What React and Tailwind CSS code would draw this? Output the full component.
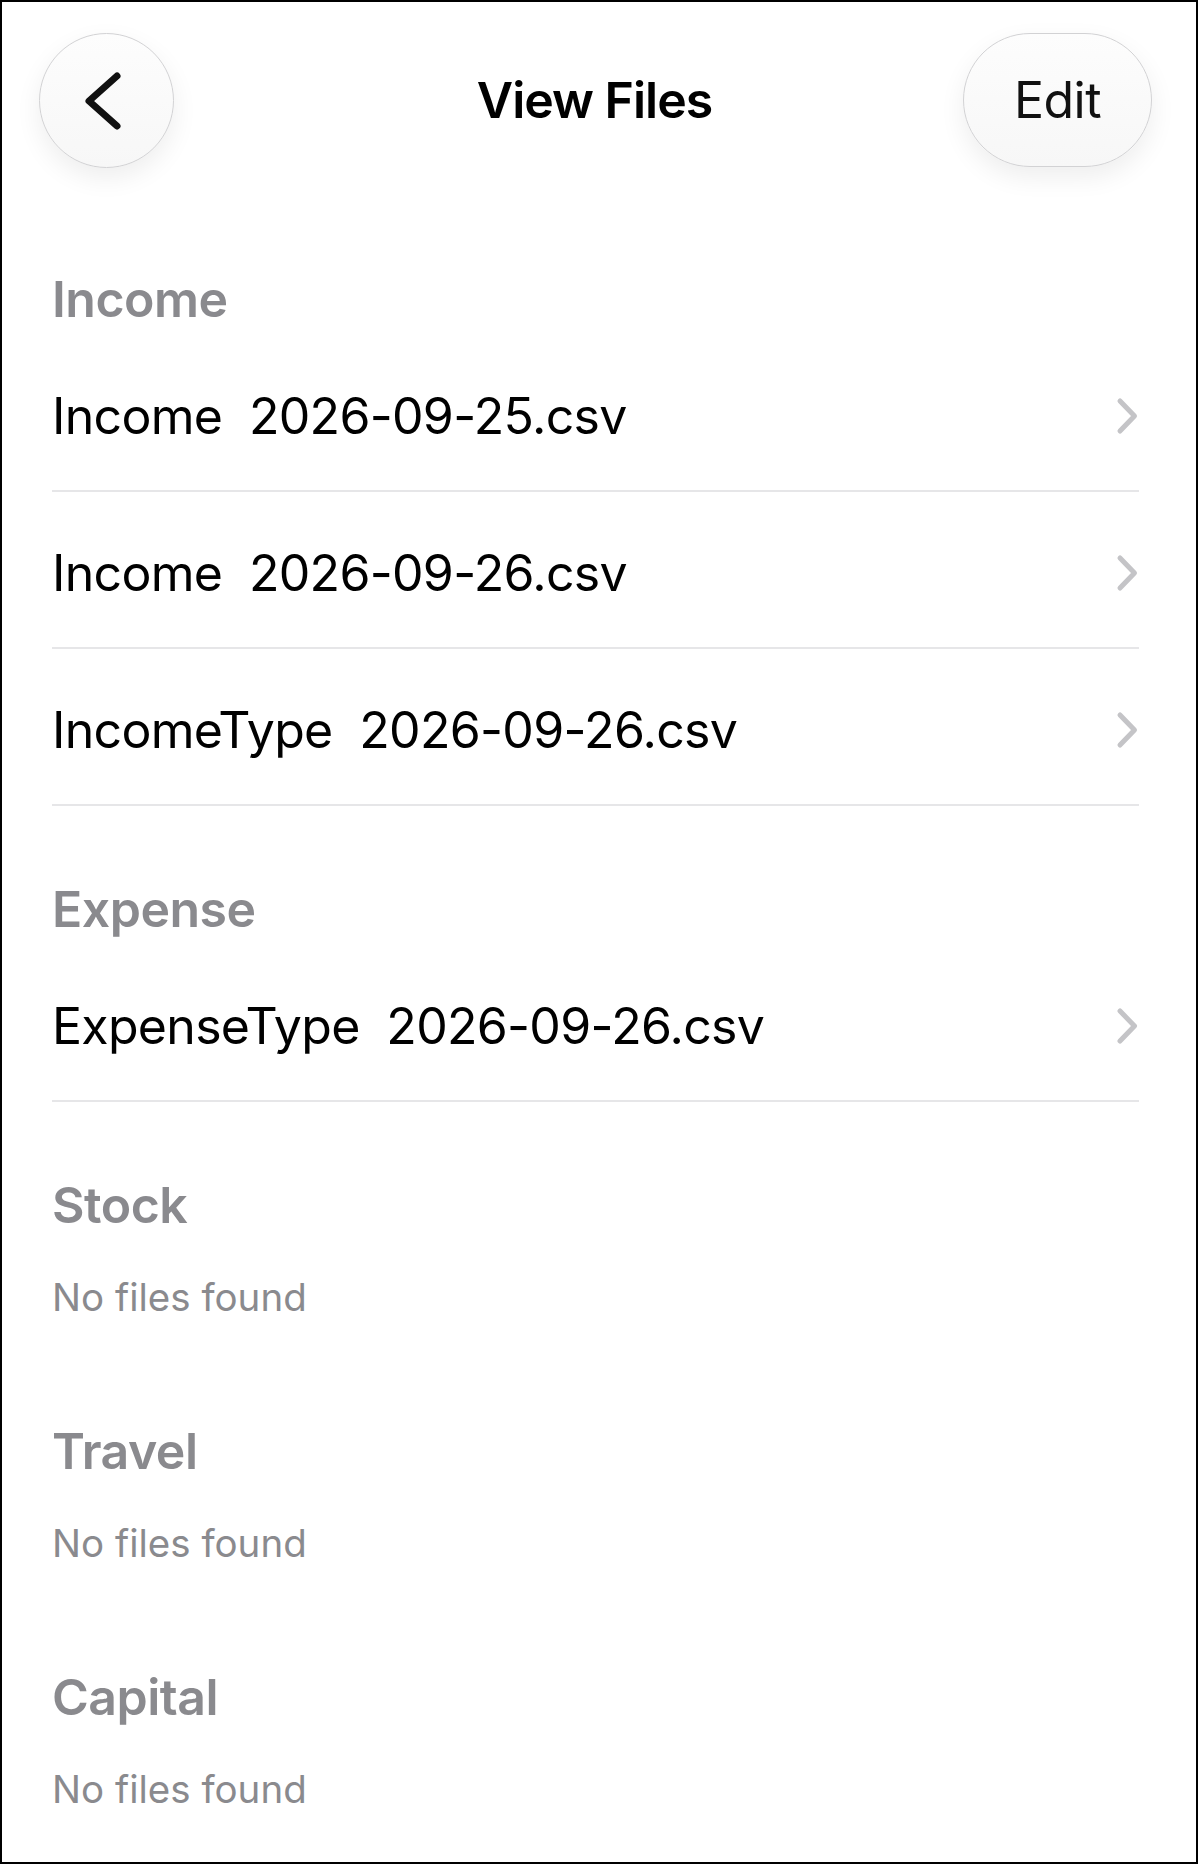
import React from "react";

const font = { fontFamily: "Inter, 'Noto Sans', sans-serif" };

function RowChevron() {
  return (
    <svg width="24" height="38" viewBox="0 0 24 38" fill="none" className="shrink-0">
      <path d="M6 4 L20.5 19 L6 34" stroke="#c4c4c7" strokeWidth="5" strokeLinecap="round" strokeLinejoin="round" />
    </svg>
  );
}

function FileRow({ name }) {
  return (
    <div className="flex h-[157px] items-center justify-between border-b-2 border-[#e6e6e8] pt-[6px] pr-[1px]">
      <span className="text-[50px] leading-[60px] tracking-[-0.014em] text-black">{name}</span>
      <RowChevron />
    </div>
  );
}

function Section({ title, files }) {
  return (
    <div className="pt-[75px]">
      <div className="h-[64px] pb-[7px] text-[50px] font-semibold leading-[57px] tracking-[-0.01em] text-[#8a8a8e]">
        {title}
      </div>
      {files.length ? (
        files.map((f) => <FileRow key={f} name={f} />)
      ) : (
        <div className="flex h-[107px] items-center pt-[4px] text-[38.5px] leading-[44px] text-[#8a8a8e]">
          No files found
        </div>
      )}
    </div>
  );
}

export default function App() {
  return (
    <div
      style={font}
      className="box-border h-[1864px] w-[1198px] overflow-hidden border-2 border-black bg-white"
    >
      <div className="grid h-[194px] grid-cols-[1fr_auto_1fr] items-start pt-[31px] pl-[37px] pr-[44px]">
        <div className="flex">
          <button className="flex h-[135px] w-[135px] items-center justify-center rounded-full border border-[#d2d2d4] bg-gradient-to-b from-[#fdfdfd] to-[#f7f7f7] shadow-[0_10px_26px_rgba(0,0,0,0.07)]">
            <svg width="42" height="60" viewBox="0 0 42 60" fill="none" className="mr-[7px]">
              <path d="M35 5 L7 30 L35 55" stroke="#111111" strokeWidth="7" strokeLinecap="round" strokeLinejoin="round" />
            </svg>
          </button>
        </div>
        <div className="mr-[2px] flex h-[135px] items-center text-[50px] font-semibold tracking-[-0.02em] text-black">
          View Files
        </div>
        <div className="flex justify-end">
          <button className="flex h-[134px] w-[189px] items-center justify-center rounded-full border border-[#d2d2d4] bg-gradient-to-b from-[#fdfdfd] to-[#f7f7f7] text-[50px] tracking-[-0.01em] text-[#111] shadow-[0_10px_26px_rgba(0,0,0,0.07)]">
            Edit
          </button>
        </div>
      </div>
      <div className="pl-[50px] pr-[57px]">
        <Section
          title="Income"
          files={["Income  2026-09-25.csv", "Income  2026-09-26.csv", "IncomeType  2026-09-26.csv"].map((s) => s.replace(/  /g, "\u00a0 "))}
        />
        <Section title="Expense" files={["ExpenseType\u00a0 2026-09-26.csv"]} />
        <Section title="Stock" files={[]} />
        <Section title="Travel" files={[]} />
        <Section title="Capital" files={[]} />
      </div>
    </div>
  );
}
